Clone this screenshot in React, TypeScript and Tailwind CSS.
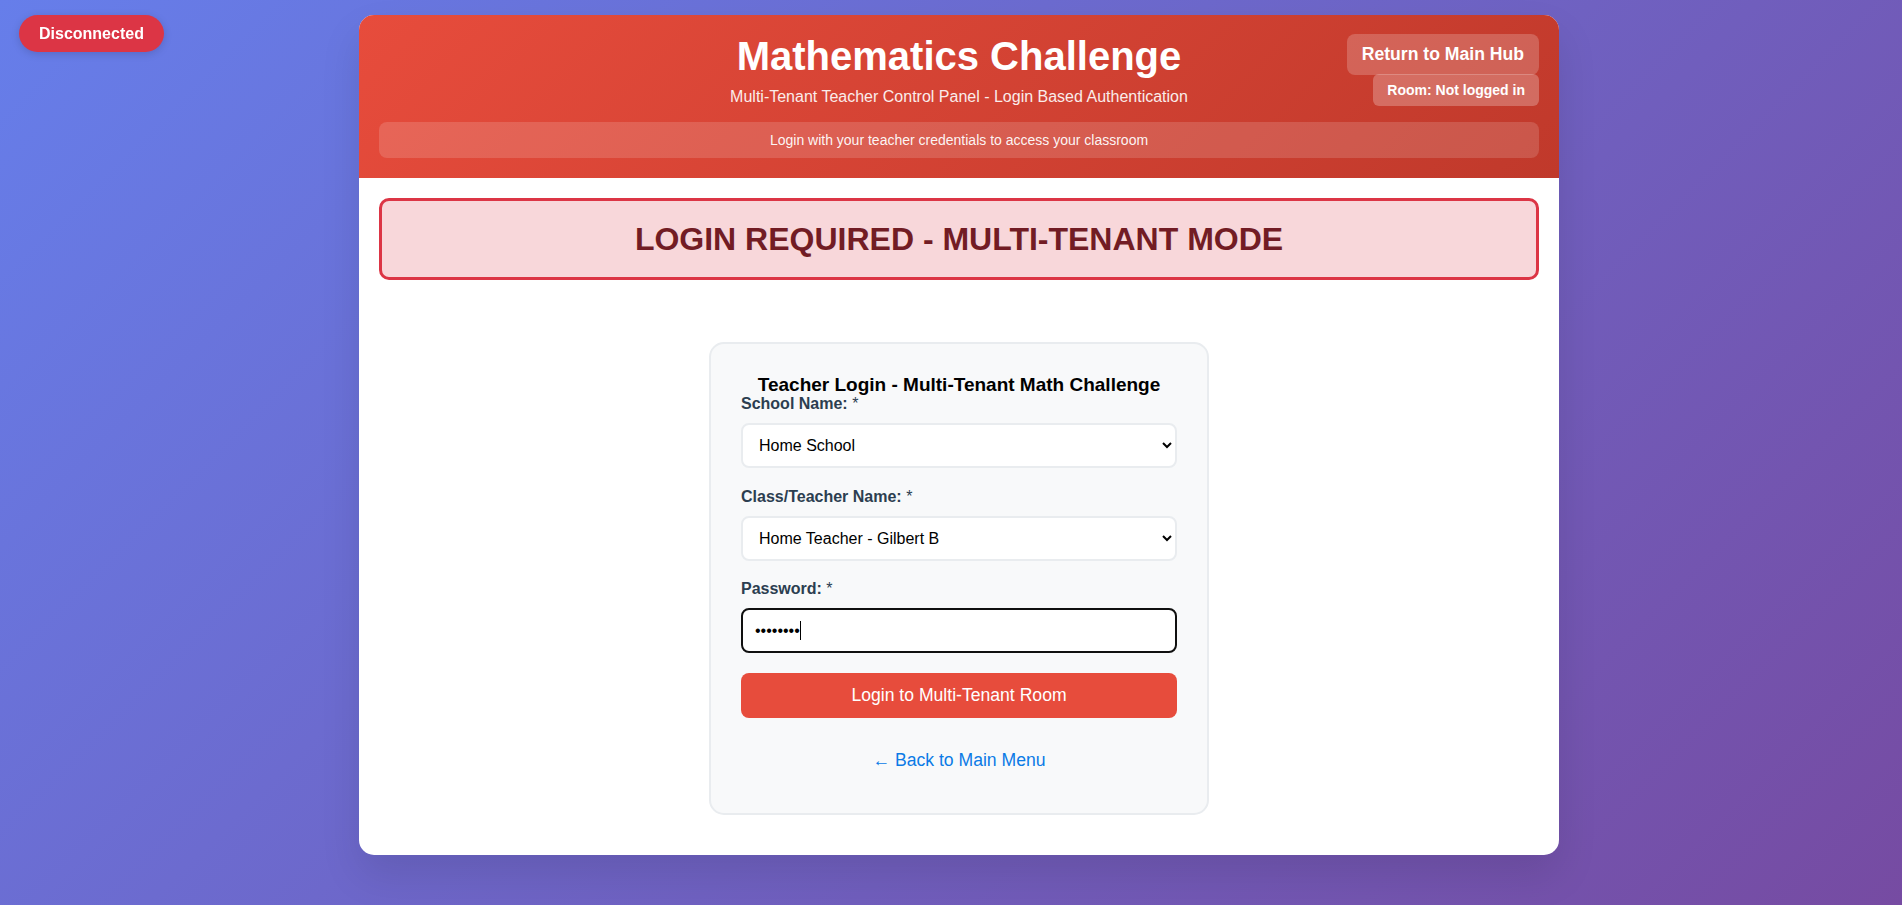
import React from "react";

export default function App() {
  return (
    <div className="min-h-screen bg-[linear-gradient(135deg,#667eea_0%,#764ba2_100%)] font-['Liberation_Sans',Arial,sans-serif]">
      <div className="fixed left-[19px] top-[15px] z-10 rounded-full bg-[#dc3545] px-5 py-[10px] text-[16px] font-bold leading-[17px] text-white shadow-[0_2px_8px_rgba(0,0,0,0.15)]">
        Disconnected
      </div>

      <div className="pl-4 pt-[15px] pb-[50px]">
        <div className="mx-auto w-[1200px] overflow-hidden rounded-[15px] bg-white shadow-[0_20px_40px_rgba(0,0,0,0.1)]">
          {/* Header */}
          <div className="relative bg-[linear-gradient(135deg,#e74c3c_0%,#c0392b_100%)] px-5 pt-[18px] pb-5 text-center text-white">
            <h1 className="text-[40px] font-bold leading-[46px]">Mathematics Challenge</h1>
            <p className="mt-[9px] text-[16px] leading-[18px] opacity-90">
              Multi-Tenant Teacher Control Panel - Login Based Authentication
            </p>
            <div className="mt-4 rounded-lg bg-white/15 py-[9px] text-[14px] leading-[18px] text-white/95">
              Login with your teacher credentials to access your classroom
            </div>

            <div className="absolute right-5 top-[19px] flex flex-col items-end">
              <button className="rounded-lg bg-white/20 px-[15px] py-[10px] text-[17.6px] font-bold leading-[21px] text-white">
                Return to Main Hub
              </button>
              <div className="mt-[-1px] rounded-md bg-white/25 px-[14px] py-2 text-[14px] font-bold leading-[16px] text-white">
                Room: Not logged in
              </div>
            </div>
          </div>

          {/* Content */}
          <div className="px-5 pt-5 pb-5">
            <div className="rounded-[10px] border-[3px] border-[#dc3545] bg-[#f8d7da] py-5 text-center text-[32px] font-bold leading-[36px] text-[#721c24]">
              LOGIN REQUIRED - MULTI-TENANT MODE
            </div>

            <div className="mx-auto mt-[62px] mb-5 w-[500px] rounded-[15px] border-2 border-[#e9ecef] bg-[#f8f9fa] px-[30px] pt-[31px] pb-[30px]">
              <h3 className="text-center text-[19px] font-bold leading-[20px] text-black">
                Teacher Login - Multi-Tenant Math Challenge
              </h3>

              <div className="mb-5">
                <label className="mb-[10px] block text-[16px] font-bold leading-[18px] text-[#2c3e50]">
                  School Name: <span className="font-normal">*</span>
                </label>
                <select
                  defaultValue="home"
                  className="h-[45px] w-full rounded-lg border-2 border-[#e9ecef] bg-white px-3 text-[16px] text-black"
                >
                  <option value="home">Home School</option>
                </select>
              </div>

              <div className="mb-[19px]">
                <label className="mb-[10px] block text-[16px] font-bold leading-[18px] text-[#2c3e50]">
                  Class/Teacher Name: <span className="font-normal">*</span>
                </label>
                <select
                  defaultValue="gilbert"
                  className="h-[45px] w-full rounded-lg border-2 border-[#e9ecef] bg-white px-3 text-[16px] text-black"
                >
                  <option value="gilbert">Home Teacher - Gilbert B</option>
                </select>
              </div>

              <div className="mb-5">
                <label className="mb-[10px] block text-[16px] font-bold leading-[18px] text-[#2c3e50]">
                  Password: <span className="font-normal">*</span>
                </label>
                <div className="relative">
                  <input
                    type="password"
                    readOnly
                    defaultValue="password"
                    className="h-[45px] w-full rounded-lg border-2 border-[#101010] bg-white px-3 text-[16px] text-black outline-none"
                  />
                  <span className="absolute left-[59px] top-[13px] h-[19px] w-px bg-black" />
                </div>
              </div>

              <button className="h-[45px] w-full rounded-lg bg-[#e74c3c] text-[17.6px] leading-[21px] text-white">
                Login to Multi-Tenant Room
              </button>

              <div className="mt-[19px] pt-[12px] pb-[10px] text-center">
                <a href="#" className="text-[17.6px] leading-[20px] text-[#0b7be6]">
                  ← Back to Main Menu
                </a>
              </div>
            </div>
          </div>
        </div>
      </div>
    </div>
  );
}
